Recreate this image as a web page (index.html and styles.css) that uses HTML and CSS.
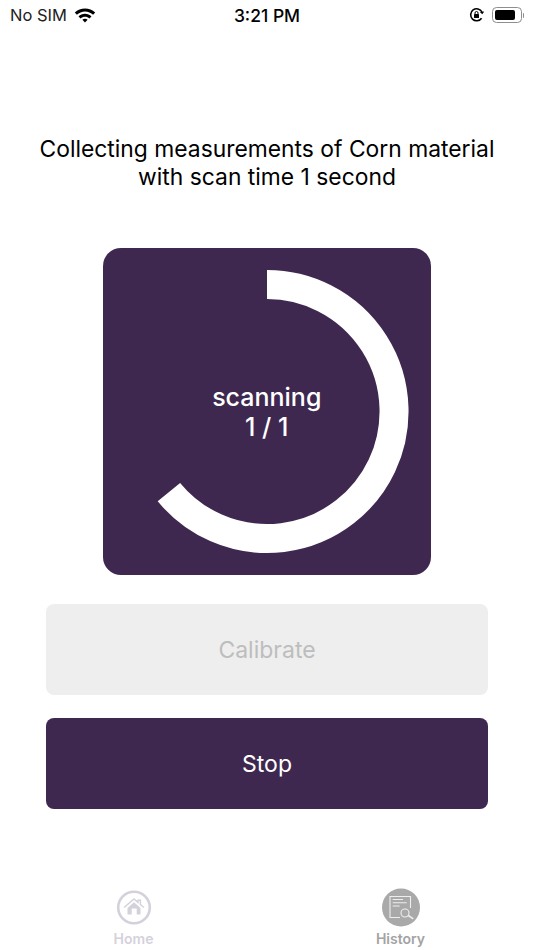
FILE: index.html
```html
<!DOCTYPE html>
<html lang="en">
<head>
    <meta charset="UTF-8">
    <meta name="viewport" content="width=device-width, initial-scale=1.0">
    <title>Scan</title>
    <link rel="stylesheet" href="styles.css">
</head>
<body>
    <div class="screen">
        <div class="status-bar">
            <div class="status-left">
                <span>No SIM</span>
                <svg class="wifi" width="22" height="16" viewBox="0 0 22 16">
                    <path d="M11 1.500c3.900 0 7.500 1.500 10.200 4.100l-2.100 2.200C17 5.800 14.100 4.500 11 4.500S5 5.800 2.900 7.800L.8 5.600C3.500 3 7.100 1.500 11 1.500z" fill="#000"/>
                    <path d="M11 6.800c2.500 0 4.800 1 6.500 2.600l-2.100 2.100C14.200 10.400 12.700 9.800 11 9.800s-3.200.6-4.400 1.700L4.500 9.400C6.200 7.800 8.500 6.800 11 6.800z" fill="#000"/>
                    <path d="M11 11.700c1 0 1.900.4 2.600 1L11 15.400l-2.600-2.700c.7-.6 1.600-1 2.600-1z" fill="#000"/>
                </svg>
            </div>
            <div class="status-time">3:21 PM</div>
            <div class="status-right">
                <svg width="16" height="16" viewBox="0 0 16 16">
                    <path d="M12.600 11.200A6 6 0 1 1 13 5" fill="none" stroke="#000" stroke-width="1.600"/>
                    <path d="M15.200 4.600 13.300 7.200 10.900 5z" fill="#000"/>
                    <rect x="5" y="7" width="5" height="4" rx=".6" fill="#000"/>
                    <path d="M6 7V6a1.500 1.500 0 0 1 3 0v1" fill="none" stroke="#000" stroke-width="1"/>
                </svg>
                <div class="battery"><div class="battery-level"></div></div>
                <div class="battery-cap"></div>
            </div>
        </div>

        <h1 class="title">Collecting measurements of Corn material<br>with scan time 1 second</h1>

        <div class="scan-panel">
            <svg class="ring" width="327" height="327" viewBox="0 0 327 327">
                <path d="M164 36.500A127 127 0 1 1 65.900 244.100" fill="none" stroke="#fff" stroke-width="29"/>
            </svg>
            <div class="scan-label">scanning<br>1 / 1</div>
        </div>

        <div class="actions">
            <button type="button" class="btn btn-disabled">Calibrate</button>
            <button type="button" class="btn btn-primary">Stop</button>
        </div>

        <div class="tab-bar">
            <div class="tab tab-home">
                <div class="tab-icon">
                    <svg width="36" height="36" viewBox="0 0 36 36">
                        <circle cx="18" cy="17.500" r="15.800" fill="none" stroke="#d5d1dc" stroke-width="2.600"/>
                        <path d="M8 17.500 18 9l4 3.400v-2.200h2.400v4.300l3.600 3" fill="none" stroke="#d5d1dc" stroke-width="1.400"/>
                        <path d="M11.500 18 18 12.300 24.500 18v6.500h-13zM15.700 18.500v6h5v-6z" fill="#d5d1dc" fill-rule="evenodd"/>
                    </svg>
                </div>
                <span>Home</span>
            </div>
            <div class="tab tab-history">
                <div class="tab-icon">
                    <svg width="40" height="40" viewBox="0 0 40 40">
                        <circle cx="20" cy="19.500" r="19" fill="#a9a9a9"/>
                        <path d="M29.500 20V8.500H9v21h10" fill="none" stroke="#eee" stroke-width="1.100"/>
                        <path d="M11.700 11.500h10.300M11.700 14.800h14M11.700 18h7" fill="none" stroke="#eee" stroke-width="1.100"/>
                        <circle cx="24" cy="25" r="4" fill="none" stroke="#eee" stroke-width="1.100"/>
                        <path d="M27.300 27.500l5 3.300" fill="none" stroke="#eee" stroke-width="1.500"/>
                    </svg>
                </div>
                <span>History</span>
            </div>
        </div>
    </div>
</body>
</html>
```

FILE: styles.css
```css
* {
    box-sizing: border-box;
}
html, body {
    margin: 0;
    padding: 0;
    background: #fff;
}
body {
    font-family: Inter, "Liberation Sans", sans-serif;
    color: #000;
}
.screen {
    width: 534px;
    height: 950px;
    display: flex;
    flex-direction: column;
    overflow: hidden;
}
.status-bar {
    height: 30px;
    display: grid;
    grid-template-columns: 1fr auto 1fr;
    align-items: center;
    padding: 0 10px;
    font-size: 16.500px;
}
.status-left {
    display: flex;
    align-items: center;
    gap: 7px;
    color: #222;
}
.status-time {
    font-size: 17.500px;
    font-weight: 500;
}
.status-right {
    display: flex;
    align-items: center;
    justify-content: flex-end;
    gap: 7px;
}
.battery {
    width: 30px;
    height: 16px;
    border: 1px solid #8e8e8e;
    border-radius: 4.500px;
    padding: 2px;
}
.battery-level {
    width: 85%;
    height: 100%;
    background: #000;
    border-radius: 2px;
}
.battery-cap {
    width: 1.500px;
    height: 5px;
    margin-left: -6px;
    background: #8e8e8e;
    border-radius: 0 1px 1px 0;
}
.title {
    margin: 105px 0 0;
    font-size: 22.850px;
    font-weight: 400;
    line-height: 28px;
    text-align: center;
}
.scan-panel {
    width: 327.500px;
    height: 327px;
    margin: 57px 0 0 103px;
    background: #3f2850;
    border-radius: 18px;
    display: flex;
    align-items: center;
    justify-content: center;
    position: relative;
}
.ring {
    position: absolute;
    top: 0;
    left: 0;
}
.scan-label {
    color: #fff;
    font-size: 25px;
    font-weight: 500;
    line-height: 30px;
    text-align: center;
}
.actions {
    display: flex;
    flex-direction: column;
    gap: 23px;
    margin: 29px 46px 0;
}
.btn {
    height: 91px;
    border: none;
    border-radius: 8px;
    font-family: inherit;
    font-size: 23px;
    padding: 0;
}
.btn-disabled {
    background: #eeeeee;
    color: #bdbdbd;
}
.btn-primary {
    background: #3f2850;
    color: #fff;
}
.tab-bar {
    display: grid;
    grid-template-columns: 1fr 1fr;
    margin-top: 79px;
}
.tab {
    display: flex;
    flex-direction: column;
    align-items: center;
    font-size: 14px;
    font-weight: 600;
    line-height: 17px;
    gap: 2px;
}
.tab-icon {
    height: 40px;
    display: flex;
    align-items: center;
}
.tab-home {
    color: #d5d1dc;
}
.tab-history {
    color: #a3a3a3;
}
```
